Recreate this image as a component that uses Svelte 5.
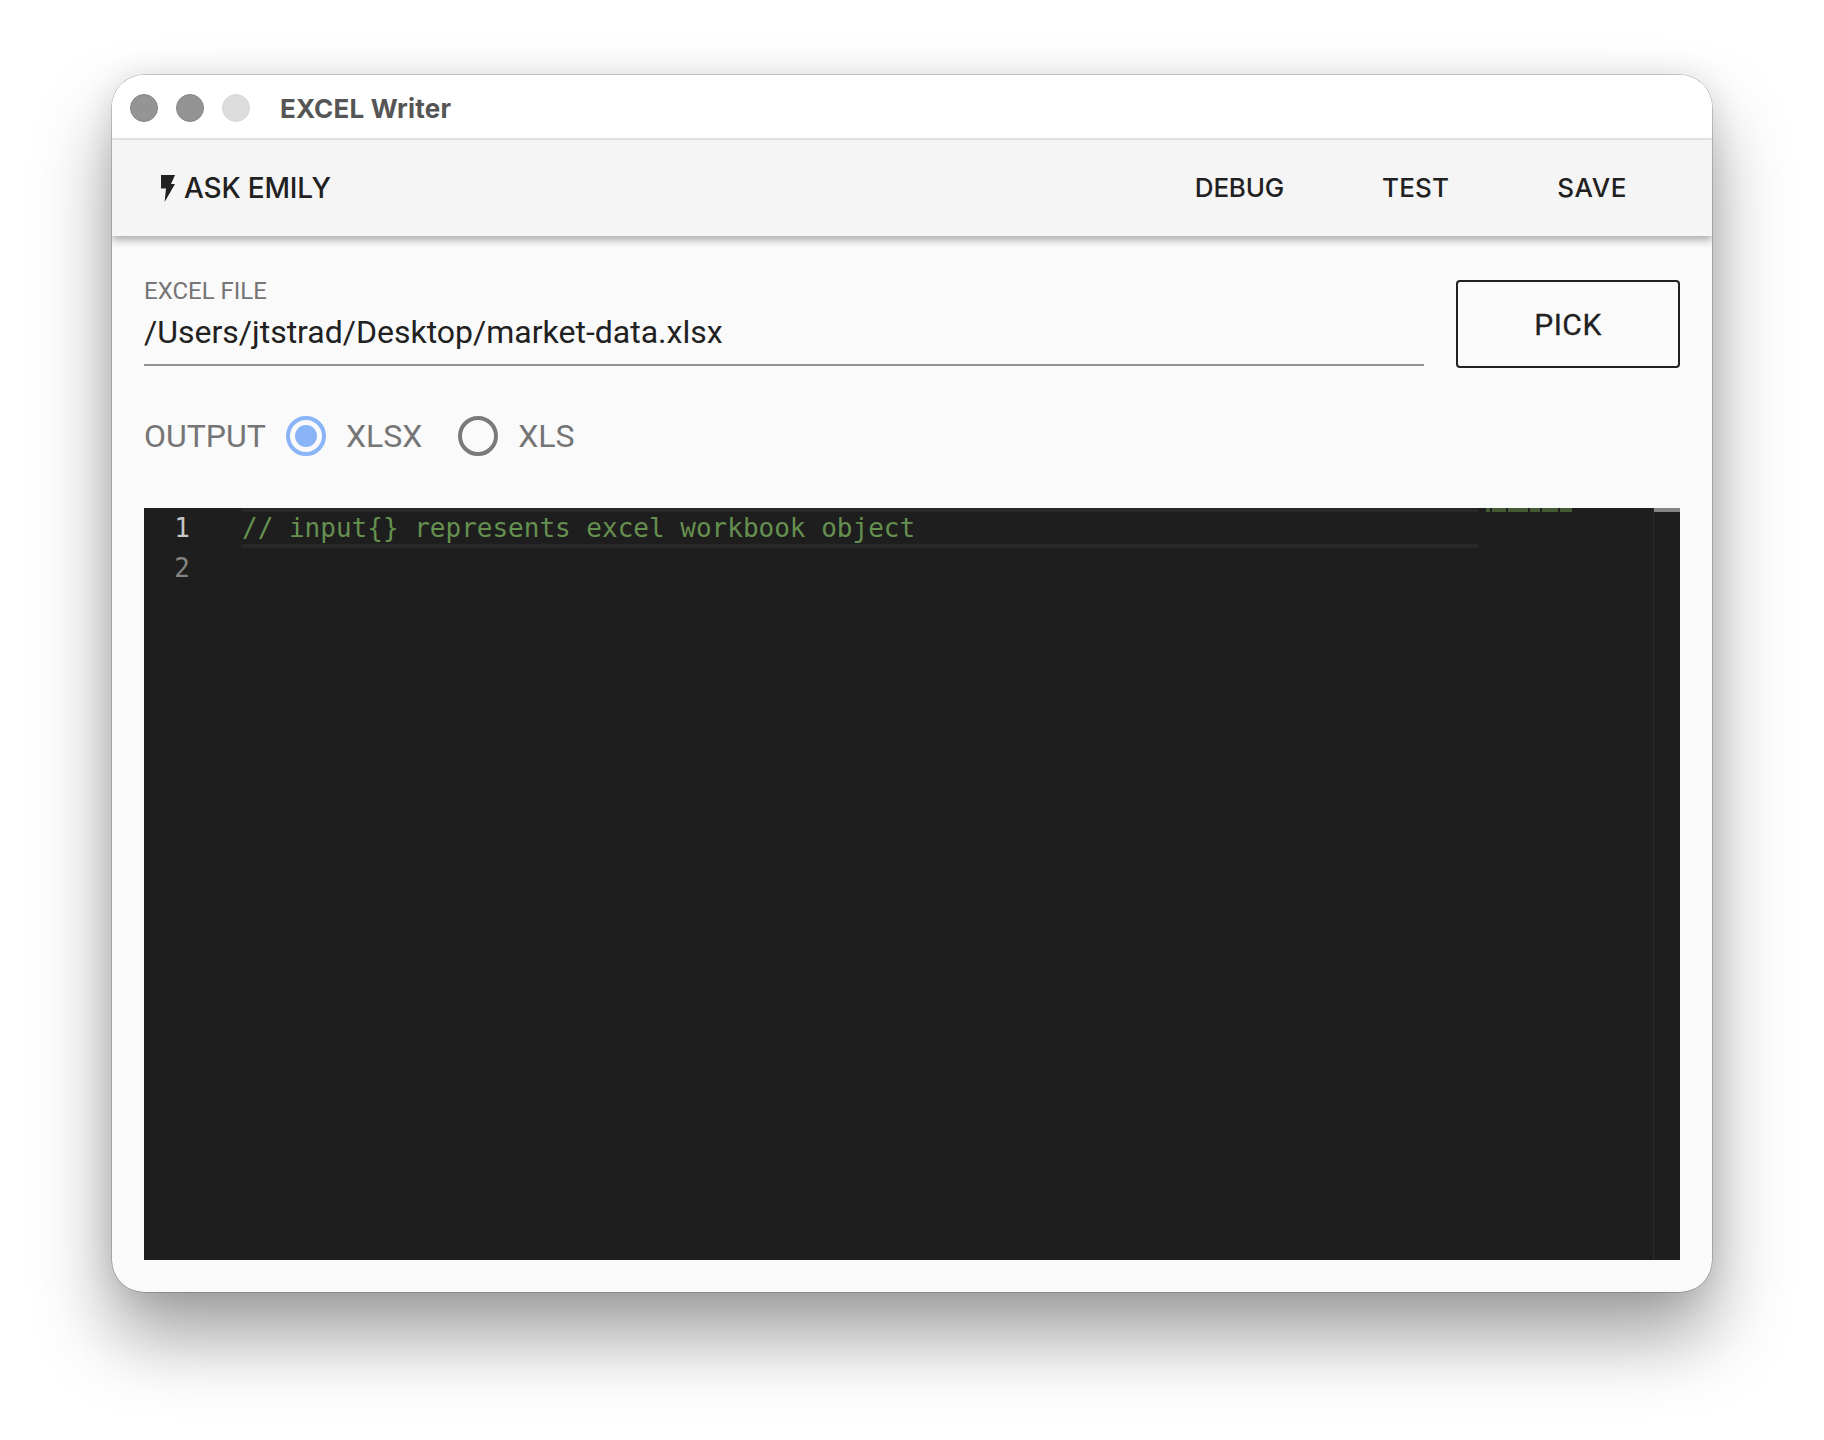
<script>
  let format = $state('xlsx');
  const marks = [
    { width: 4, gap: 2 }, { width: 14, gap: 2 }, { width: 20, gap: 2 },
    { width: 10, gap: 2 }, { width: 16, gap: 2 }, { width: 12, gap: 0 }
  ];
</script>

<div class="page">
  <div class="window">
    <header class="titlebar">
      <div class="lights">
        <span class="light"></span>
        <span class="light"></span>
        <span class="light off"></span>
      </div>
      <span class="title">EXCEL Writer</span>
    </header>

    <nav class="toolbar">
      <button class="ask">
        <svg class="bolt" viewBox="0 0 15 27" width="15" height="27" aria-hidden="true">
          <path d="M1 0H15L11 9H15L4.6 27L6 13.5H1Z" fill="#212121" />
        </svg>
        <span>ASK EMILY</span>
      </button>
      <div class="actions">
        <button class="action debug">DEBUG</button>
        <button class="action test">TEST</button>
        <button class="action save">SAVE</button>
      </div>
    </nav>

    <main class="content">
      <section class="file-row">
        <label class="field">
          <span class="field-label">EXCEL FILE</span>
          <input class="field-input" value="/Users/jtstrad/Desktop/market-data.xlsx" />
        </label>
        <button class="pick">PICK</button>
      </section>

      <section class="output" role="radiogroup">
        <span class="output-label">OUTPUT</span>
        <label class="radio">
          <input type="radio" name="format" value="xlsx" bind:group={format} />
          <span class="dot"></span>
          <span>XLSX</span>
        </label>
        <label class="radio">
          <input type="radio" name="format" value="xls" bind:group={format} />
          <span class="dot"></span>
          <span>XLS</span>
        </label>
      </section>

      <section class="editor">
        <div class="gutter">
          <div class="num active">1</div>
          <div class="num">2</div>
        </div>
        <div class="code">
          <div class="line current">// input{'{}'} represents excel workbook object</div>
          <div class="line"></div>
        </div>
        <div class="minimap">
          {#each marks as m}
            <span class="mark" style="width:{m.width}px;margin-right:{m.gap}px"></span>
          {/each}
        </div>
        <div class="overview"><span class="thumb"></span></div>
      </section>
    </main>
  </div>
</div>

<style>
  :global(body) {
    margin: 0;
    background: #fff;
  }
  .page {
    width: 1824px;
    height: 1440px;
    box-sizing: border-box;
    padding: 75px 112px 0;
  }
  .window {
    width: 1600px;
    height: 1217px;
    box-sizing: border-box;
    display: flex;
    flex-direction: column;
    background: #fafafa;
    border-radius: 32px;
    overflow: hidden;
    box-shadow: 0 0 0 0.5px rgba(0, 0, 0, 0.35), 0 44px 76px rgba(0, 0, 0, 0.38), 0 0 30px rgba(0, 0, 0, 0.1);
  }
  .titlebar {
    height: 65px;
    flex: none;
    box-sizing: border-box;
    display: flex;
    align-items: center;
    padding: 2px 0 0 18px;
    background: #fff;
    border-bottom: 2px solid #e8e8e8;
  }
  .lights {
    display: flex;
    gap: 18px;
  }
  .light {
    width: 28px;
    height: 28px;
    box-sizing: border-box;
    border-radius: 50%;
    background: #949494;
    border: 1px solid #858585;
  }
  .light.off {
    background: #dcdcdc;
    border-color: #d6d6d6;
  }
  .title {
    margin-left: 30px;
    padding-top: 2px;
    font: 700 26px/1 Inter, "Liberation Sans", sans-serif;
    letter-spacing: 0.2px;
    color: #555;
  }
  .toolbar {
    height: 96px;
    flex: none;
    position: relative;
    z-index: 1;
    display: flex;
    align-items: center;
    justify-content: space-between;
    background: #f5f5f5;
    box-shadow: 0 4px 8px rgba(0, 0, 0, 0.32);
  }
  button {
    background: none;
    border: 0;
    padding: 0;
    color: #212121;
    font-family: Inter, "Liberation Sans", sans-serif;
    font-weight: 500;
  }
  .ask {
    display: flex;
    align-items: center;
    gap: 9px;
    margin-left: 48px;
    font-size: 28px;
    letter-spacing: -0.2px;
  }
  .actions {
    display: flex;
    align-items: center;
    margin-right: 85px;
  }
  .action {
    font-size: 26px;
    line-height: 32px;
  }
  .debug { margin-right: 98px; letter-spacing: -0.2px; }
  .test { margin-right: 108px; letter-spacing: 0.2px; }
  .save { letter-spacing: 0.6px; }
  .content {
    flex: 1;
    display: flex;
    flex-direction: column;
    padding: 44px 32px 32px;
    min-height: 0;
  }
  .file-row {
    display: flex;
    gap: 32px;
    flex: none;
  }
  .field {
    flex: 1;
    height: 86px;
    box-sizing: border-box;
    display: flex;
    flex-direction: column;
    border-bottom: 2px solid #8f8f8f;
  }
  .field-label {
    margin-top: -3px;
    font: 400 24px/28px Roboto, sans-serif;
    color: #757575;
  }
  .field-input {
    border: 0;
    outline: 0;
    background: transparent;
    padding: 0;
    margin-top: 7px;
    width: 100%;
    height: 40px;
    font: 400 32px/40px Roboto, sans-serif;
    color: #212121;
  }
  .pick {
    width: 224px;
    height: 88px;
    box-sizing: border-box;
    border: 2px solid #212121;
    border-radius: 4px;
    font-family: Roboto, sans-serif;
    font-weight: 400;
    font-size: 30px;
    letter-spacing: 0.5px;
    -webkit-text-stroke: 0.3px #212121;
  }
  .output {
    flex: none;
    display: flex;
    align-items: center;
    height: 40px;
    margin-top: 48px;
    font: 400 32px/40px Roboto, sans-serif;
    color: #757575;
  }
  .output-label {
    margin-right: 20px;
  }
  .radio {
    display: flex;
    align-items: center;
    gap: 20px;
    margin-right: 36px;
  }
  .radio input {
    display: none;
  }
  .dot {
    width: 40px;
    height: 40px;
    box-sizing: border-box;
    border-radius: 50%;
    border: 4px solid #7a7a7a;
    position: relative;
  }
  .radio input:checked + .dot {
    border-color: #8ab4f8;
  }
  .radio input:checked + .dot::after {
    content: "";
    position: absolute;
    inset: 5px;
    border-radius: 50%;
    background: #8ab4f8;
  }
  .editor {
    flex: 1;
    min-height: 0;
    margin-top: 52px;
    position: relative;
    display: flex;
    background: #1e1e1e;
    font: 400 26px/40px "DejaVu Sans Mono", monospace;
  }
  .gutter {
    width: 98px;
    flex: none;
    box-sizing: border-box;
    padding-right: 52px;
    text-align: right;
  }
  .num {
    height: 40px;
    color: #858585;
  }
  .num.active {
    color: #c6c6c6;
  }
  .code {
    width: 1236px;
    flex: none;
  }
  .line {
    height: 40px;
    white-space: pre;
    color: #65904f;
  }
  .line.current {
    box-sizing: border-box;
    border: solid #282828;
    border-width: 4px 0;
    margin-left: -1px;
    padding-left: 1px;
    line-height: 32px;
  }
  .minimap {
    position: absolute;
    top: 0;
    left: 1342px;
    height: 4px;
    display: flex;
  }
  .mark {
    height: 4px;
    background: #435a34;
  }
  .overview {
    position: absolute;
    top: 0;
    right: 0;
    bottom: 0;
    width: 27px;
    box-sizing: border-box;
    border-left: 1px solid #2c2c2c;
  }
  .thumb {
    display: block;
    height: 4px;
    background: #858585;
  }
</style>
